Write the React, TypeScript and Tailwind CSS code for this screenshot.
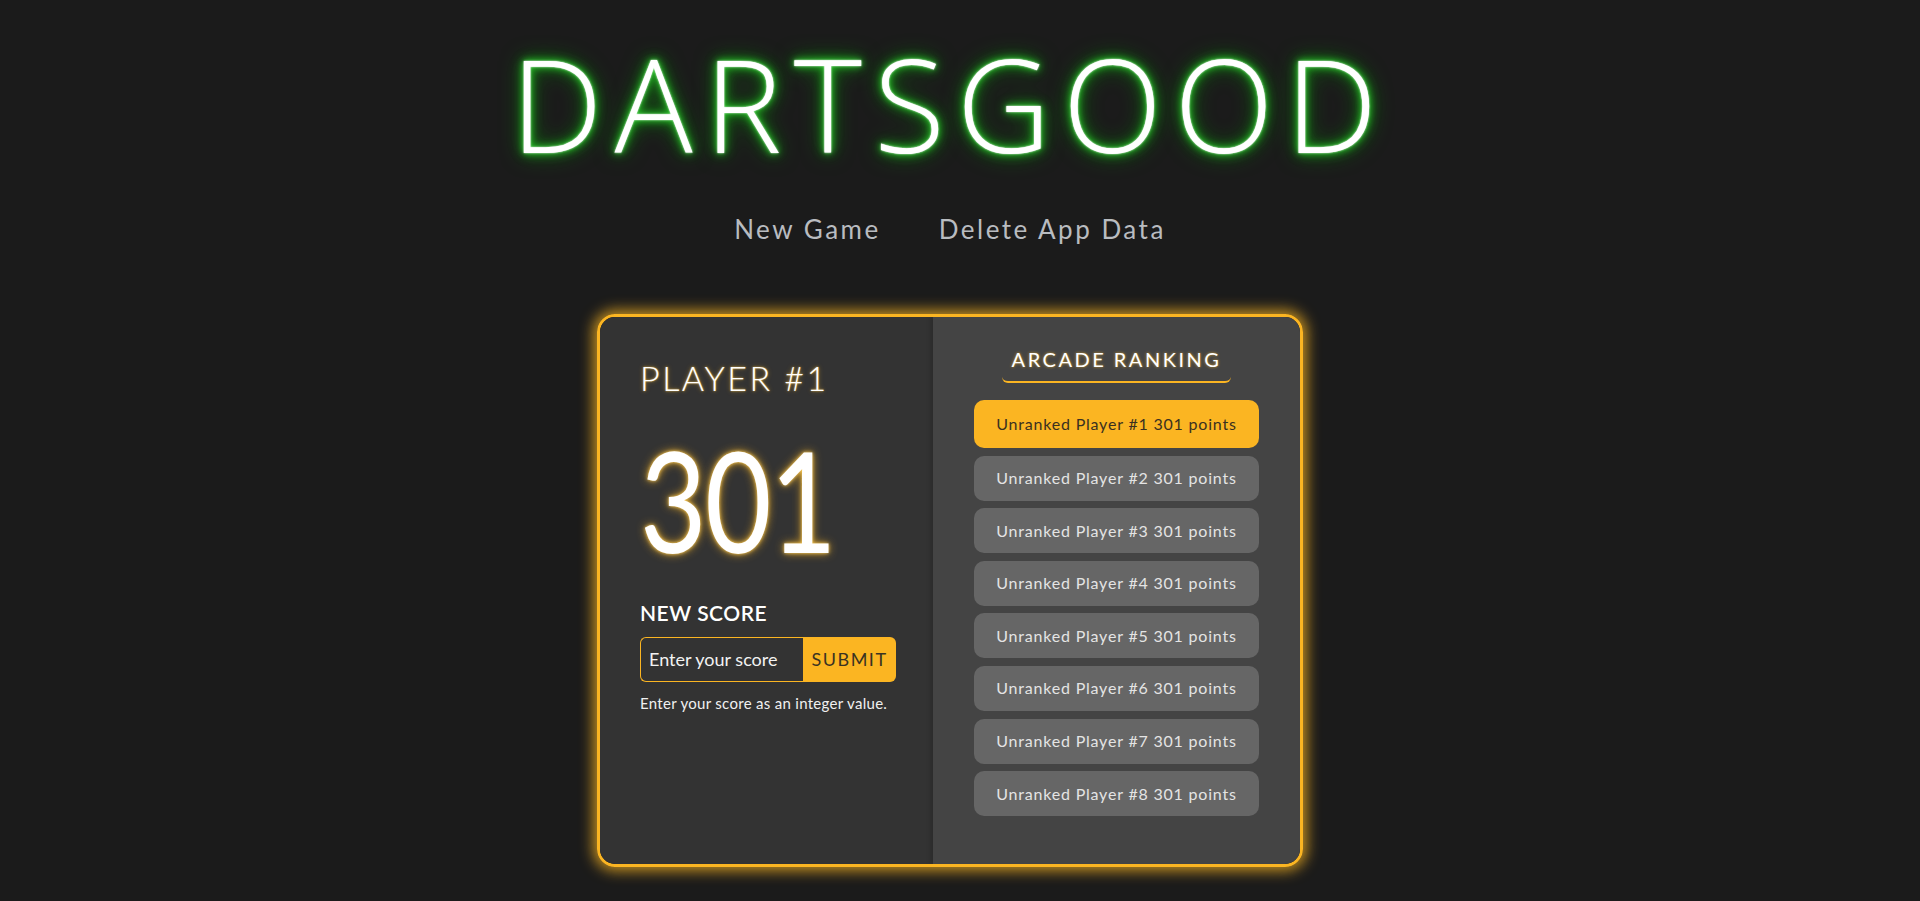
import React from "react";

const players = [1, 2, 3, 4, 5, 6, 7, 8];

export default function App() {
  return (
    <div className="min-h-screen bg-[#1b1b1b] pr-[20px] pb-[40px] font-['Lato','Open_Sans',sans-serif]">
      <h1 className="pt-[38px] text-center font-['Open_Sans',sans-serif] text-[130px] font-light leading-none tracking-[12px] text-white [text-shadow:0_0_2px_#fff,0_0_6px_#2fd12f,0_0_12px_#1fb81f,0_0_22px_#0a8a0a]">
        DARTSGOOD
      </h1>
      <nav className="mt-[48px] flex justify-center gap-[58px] text-[26px] leading-none tracking-[2.5px] text-[#b9bcc0]">
        <span>New Game</span>
        <span>Delete App Data</span>
      </nav>
      <div className="mx-auto mt-[72px] flex h-[553px] w-[706px] overflow-hidden rounded-[18px] border-[3px] border-[#fbb522] shadow-[0_0_14px_4px_rgba(251,181,34,0.75)]">
        <div className="flex w-[333px] flex-col bg-[#333333] pl-[40px] pt-[44px]">
          <div className="text-[34px] font-light leading-none tracking-[2.5px] text-white [text-shadow:0_0_2px_rgba(255,200,80,0.9),0_0_5px_rgba(251,181,34,0.45)]">
            PLAYER #1
          </div>
          <div className="mt-[34px] leading-none">
            <span className="inline-block origin-left scale-x-[0.82] text-[140px] font-normal leading-none tracking-[-2px] text-white [text-shadow:0_0_4px_rgba(255,210,100,1),0_0_10px_rgba(251,181,34,0.85)]">
              301
            </span>
          </div>
          <div className="mt-[33px] text-[21px] font-semibold leading-none tracking-[0.5px] text-white">
            NEW SCORE
          </div>
          <div className="mt-[14px] flex h-[45px] w-[256px]">
            <div className="flex w-[163px] items-center rounded-l-[6px] border border-r-0 border-[#fbb522] pl-[8px] text-[18px] text-[#f2f2f2]">
              Enter your score
            </div>
            <div className="flex flex-1 items-center justify-center rounded-r-[6px] bg-[#fbb522] text-[18px] tracking-[1.5px] text-[#3a3322]">
              SUBMIT
            </div>
          </div>
          <div className="mt-[10px] text-[15px] tracking-[0.3px] text-[#f0f0f0]">
            Enter your score as an integer value.
          </div>
        </div>
        <div className="flex flex-1 flex-col items-center bg-[#444444] pt-[28px] shadow-[-3px_0_4px_rgba(0,0,0,0.15)]">
          <div className="rounded-[6px] border-b-2 border-[#fbb522] px-[10px] pb-[8px] text-[20px] font-normal leading-[28px] tracking-[2.5px] text-white [text-shadow:0_0_3px_rgba(251,181,34,0.8)]">
            ARCADE RANKING
          </div>
          <div className="mt-[17px] flex w-[285px] flex-col gap-[7.6px]">
            {players.map((n) => (
              <div
                key={n}
                className={
                  n === 1
                    ? "flex h-[48px] items-center justify-center rounded-[10px] bg-[#fbb522] text-[16px] tracking-[0.8px] text-[#3a3020]"
                    : "flex h-[45px] items-center justify-center rounded-[10px] bg-[#666666] text-[16px] tracking-[0.8px] text-[#e4e4e4]"
                }
              >
                Unranked Player #{n} 301 points
              </div>
            ))}
          </div>
        </div>
      </div>
    </div>
  );
}
